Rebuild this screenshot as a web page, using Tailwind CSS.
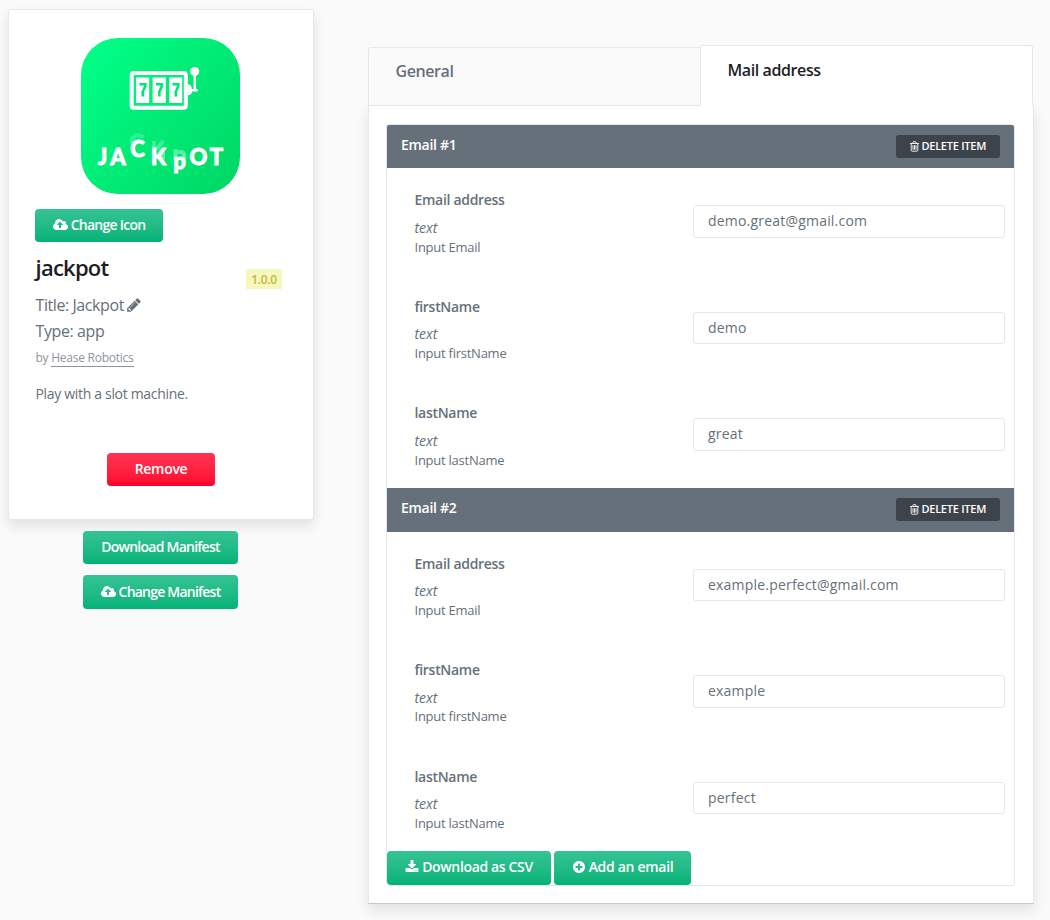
<!DOCTYPE html>
<html lang="en">
<head>
<meta charset="utf-8">
<title>Jackpot</title>
<script src="https://cdn.jsdelivr.net/npm/@tailwindcss/browser@4"></script>
</head>
<body class="bg-[#fafafa] w-[1050px] h-[920px] overflow-hidden font-['Open_Sans',sans-serif] text-[#66707a]">
<svg class="hidden" aria-hidden="true">
  <symbol id="cloud" viewBox="0 0 1920 1792"><path fill="currentColor" d="M1280 864q0-14-9-23L919 489q-9-9-23-9t-23 9L522 840q-10 12-10 24 0 14 9 23t23 9h224v352q0 13 9.500 22.500t22.500 9.500h192q13 0 22.500-9.500t9.500-22.500V896h224q13 0 22.500-9.500t9.500-22.500zm640 288q0 159-112.500 271.500T1536 1536H448q-185 0-316.500-131.500T0 1088q0-130 70-240t188-165q-2-30-2-43 0-212 150-362t362-150q156 0 285.500 87T1242 444q71-62 166-62 106 0 181 75t75 181q0 76-41 138 130 31 213.500 135.500T1920 1152z"/></symbol>
  <symbol id="pencil" viewBox="0 0 1792 1792"><path fill="currentColor" d="M491 1536l91-91-235-235-91 91v107h128v128h107zm523-928q0-22-22-22-10 0-17 7l-542 542q-7 7-7 17 0 22 22 22 10 0 17-7l542-542q7-7 7-17zm-54-192l416 416-832 832H128v-416zm683 96q0 53-37 90l-166 166-416-416 166-165q36-38 90-38 53 0 91 38l235 234q37 39 37 91z"/></symbol>
  <symbol id="download" viewBox="0 0 1792 1792"><path fill="currentColor" d="M1344 1344q0-26-19-45t-45-19-45 19-19 45 19 45 45 19 45-19 19-45zm256 0q0-26-19-45t-45-19-45 19-19 45 19 45 45 19 45-19 19-45zm128-224v320q0 40-28 68t-68 28H160q-40 0-68-28t-28-68v-320q0-40 28-68t68-28h465l135 136q58 56 136 56t136-56l136-136h464q40 0 68 28t28 68zm-325-569q17 41-14 70l-448 448q-18 19-45 19t-45-19L403 621q-31-29-14-70 17-39 59-39h256V64q0-26 19-45t45-19h256q26 0 45 19t19 45v448h256q42 0 59 39z"/></symbol>
  <symbol id="plus" viewBox="0 0 1792 1792"><path fill="currentColor" d="M1344 960V832q0-26-19-45t-45-19h-256V512q0-26-19-45t-45-19H832q-26 0-45 19t-19 45v256H512q-26 0-45 19t-19 45v128q0 26 19 45t45 19h256v256q0 26 19 45t45 19h128q26 0 45-19t19-45v-256h256q26 0 45-19t19-45zm320-64q0 209-103 385.500T1281.500 1561 896 1664t-385.500-103T231 1281.500 128 896t103-385.500T510.500 231 896 128t385.500 103T1561 510.500 1664 896z"/></symbol>
  <symbol id="trash" viewBox="0 0 9 11"><path fill="none" stroke="currentColor" stroke-width=".9" d="M0 2.500h9M2.800 2.300 3.300.700h2.400l.5 1.600M1.200 2.700v6.400q0 1.100 1 1.100h4.600q1 0 1-1.100V2.700M3 4.200v4.500M4.500 4.200v4.500M6 4.200v4.500"/></symbol>
</svg>

<div class="flex items-start pl-2">
  <!-- App summary -->
  <aside class="w-[306px] pt-[9px] flex flex-col items-center shrink-0">
    <div class="w-full h-[511px] rounded-[3px] border border-[#e6e7e8] bg-white shadow-[0_6px_12px_rgba(0,0,0,0.1)] px-[26px] pt-[28px] flex flex-col items-start">
      <svg class="self-center w-[159px] h-[156px] shrink-0 mr-[1px]" viewBox="0 0 159 156">
        <defs>
          <linearGradient id="g" x1="0" y1="0.100" x2="1" y2="0.900"><stop offset="0" stop-color="#00ff87"/><stop offset="1" stop-color="#00d865"/></linearGradient>
          <linearGradient id="fade" gradientUnits="userSpaceOnUse" x1="0" y1="94" x2="0" y2="122"><stop offset="0" stop-color="#5df5c0" stop-opacity=".35"/><stop offset="1" stop-color="#8df7cc" stop-opacity=".75"/></linearGradient>
          <filter id="soft" x="-20%" y="-20%" width="140%" height="140%"><feGaussianBlur stdDeviation=".6"/></filter>
        </defs>
        <rect width="159" height="156" rx="37" fill="url(#g)"/>
        <path fill="none" stroke="#fff" stroke-width="4" d="M52.200 35h50.600q2 0 2 2v30.700q0 2-2 2H52.200q-1.500 0-1.500-2V37q0-2 1.500-2z"/>
        <g fill="#fff">
          <path d="M55 39.500h13.200v25.500H55zM71.600 39.500h13.200v25.500H71.600zM88.200 39.500h13v25.500h-13z"/>
          <circle cx="113.700" cy="33.500" r="4.500"/>
          <path d="M106.500 46q4.300.5 4.300 5h1.800V36h2.400v15h1.700v2.600h-5.700q0 3.500-4.500 4z"/>
        </g>
        <path fill="none" stroke="#00e676" stroke-width="2.600" d="M58.500 46.200h5.800v2l-2.500 5.500v4.800M75 46.200h5.800v2l-2.500 5.500v4.800M91.500 46.200h5.800v2l-2.500 5.500v4.800"/>
        <!-- motion trails of the shifted letters -->
        <g fill="none" stroke="url(#fade)" stroke-width="4" filter="url(#soft)">
          <path d="M62.500 99.500q-3-3-7-2.200-5 1.200-4.500 8"/>
          <path d="M73 103v10M82.500 102.500l-7 9M82 112.500v9"/>
          <path d="M94.500 111v10M95 114h6q3 1 2 9"/>
        </g>
        <g font-family="Lato" font-weight="900" font-size="22" text-anchor="middle" fill="#fff" stroke="#fff" stroke-width=".9"><text x="21.500" y="127">J</text><text x="37" y="127">A</text><text x="56.500" y="118.700">C</text><text x="77.500" y="127">K</text><text x="98.500" y="131">p</text><text x="117.500" y="127">O</text><text x="135.500" y="127">T</text></g>
      </svg>
      <button class="mt-[15px] w-[128px] h-[33px] pb-[2px] shrink-0 rounded bg-linear-to-b from-[#34c396] to-[#00b377] text-white text-sm font-semibold tracking-[-0.75px] flex items-center justify-center gap-[3px]"><svg class="w-[15px] h-[14px]"><use href="#cloud"/></svg>Change Icon</button>
      <div class="w-full flex justify-between">
        <h1 class="mt-[10px] ml-[0.5px] text-[22px] leading-[30px] font-semibold tracking-[-0.75px] text-[#1c1e26]">jackpot</h1>
        <span class="mt-[27px] mr-[5px] w-[36px] h-5 bg-[#f5f8bc] text-[#c4b83c] text-[12px] leading-[21px] font-semibold tracking-[-0.3px] text-center">1.0.0</span>
      </div>
      <div class="ml-[0.5px]">
        <p class="mt-[3px] text-[16px] leading-[26px] tracking-[-0.42px] flex items-center gap-[2px]">Title: Jackpot <svg class="w-4 h-4"><use href="#pencil"/></svg></p>
        <p class="text-[16px] leading-[26px] tracking-[-0.4px]">Type: app</p>
        <p class="mt-[5px] text-[12px] leading-[17px] tracking-[-0.25px] text-[#8d949b]">by <span class="inline-block border-b border-[#8d949b]">Hease Robotics</span></p>
        <p class="mt-[17px] text-[14px] leading-5 tracking-[-0.32px]">Play with a slot machine.</p>
      </div>
      <button class="self-center mt-[49px] w-[108px] h-[33px] pb-[2px] shrink-0 rounded bg-linear-to-b from-[#ff3355] to-[#ff0029] text-white text-sm font-semibold tracking-[-0.3px]">Remove</button>
    </div>
    <button class="mt-[11px] mr-[1px] w-[155px] h-[33px] pb-[2px] rounded bg-linear-to-b from-[#34c396] to-[#00b377] text-white text-sm font-semibold tracking-[-0.75px]">Download Manifest</button>
    <button class="mt-[11px] mr-[1px] w-[155px] h-[34px] pb-[1px] rounded bg-linear-to-b from-[#34c396] to-[#00b377] text-white text-sm font-semibold tracking-[-0.78px] flex items-center justify-center gap-[3px]"><svg class="w-[15px] h-[14px]"><use href="#cloud"/></svg>Change Manifest</button>
  </aside>

  <!-- Settings -->
  <main class="ml-[54px] mt-[45px] w-[666px] shrink-0">
    <nav class="flex items-end h-[61px] relative z-10 -mb-px">
      <div class="w-[332px] h-[59px] border border-r-0 border-[#e6e7e8] rounded-tl-[3px] bg-[#fafafa] pl-[26.5px] pt-[11px] text-[16px] leading-6 font-semibold tracking-[-0.4px]">General</div>
      <div class="w-[333px] h-[61px] border border-b-0 border-[#e6e7e8] rounded-tr-[3px] bg-white pl-[26.5px] pt-[12px] text-[16px] leading-6 font-semibold tracking-[-0.4px] text-[#1c1e26]">Mail address</div>
    </nav>
    <div class="h-[799px] border-x border-b border-x-[#e6e7e8] border-b-[#c6c8ca] bg-white shadow-[0_6px_12px_rgba(0,0,0,0.1)] px-[17px] pt-[19px]">
      <div class="h-[762px] w-[629px] border border-[#e6e7e8] rounded-[3px] overflow-hidden" id="list"></div>
    </div>
  </main>
</div>

<template id="head">
  <div class="h-[43.7px] first:h-[43.4px] bg-[#66707a] pl-[14px] pr-[14px] flex justify-between items-start">
    <span class="t mt-[10.4px] text-[14px] leading-5 font-semibold tracking-[-0.3px] text-white"></span>
    <button class="mt-[10.2px] w-[104px] h-[22.6px] rounded-[3px] bg-[#3c434b] text-white text-[11px] font-semibold tracking-[-0.25px] flex items-center justify-center gap-[2.5px]"><svg class="w-[9px] h-[11px]"><use href="#trash"/></svg>DELETE ITEM</button>
  </div>
</template>
<template id="row">
  <div class="h-[106.5px] flex justify-between pl-[27.500px] pr-[9px]">
    <div>
      <p class="a mt-[22px] text-[14px] leading-5 font-semibold tracking-[-0.3px]"></p>
      <p class="mt-[7.55px] text-[14px] leading-[19px] italic tracking-[-0.05px]">text</p>
      <p class="b mt-[0.85px] text-[13px] leading-[19px] tracking-[-0.25px]"></p>
    </div>
    <div class="c mt-[37px] w-[312px] h-[32.6px] border border-[#e6e7e8] rounded-[3px] bg-white pl-[14px] text-[14px] leading-[30.4px] tracking-[0.2px]"></div>
  </div>
</template>
<template id="foot">
  <div class="flex gap-[3px]">
    <button class="w-[164px] h-[34px] pb-[2px] rounded bg-linear-to-b from-[#34c396] to-[#00b377] text-white text-sm font-semibold tracking-[-0.35px] flex items-center justify-center gap-[3px]"><svg class="w-[14px] h-[14px]"><use href="#download"/></svg>Download as CSV</button>
    <button class="w-[137px] h-[34px] pb-[2px] rounded bg-linear-to-b from-[#34c396] to-[#00b377] text-white text-sm font-semibold tracking-[-0.3px] flex items-center justify-center gap-[3px]"><svg class="w-[14px] h-[14px]"><use href="#plus"/></svg>Add an email</button>
  </div>
</template>
<script>
const list = document.getElementById('list');
const make = id => document.getElementById(id).content.firstElementChild.cloneNode(true);
[['demo.great@gmail.com', 'demo', 'great'], ['example.perfect@gmail.com', 'example', 'perfect']].forEach((values, i) => {
  const head = make('head');
  head.querySelector('.t').textContent = 'Email #' + (i + 1);
  list.append(head);
  [['Email address', 'Input Email'], ['firstName', 'Input firstName'], ['lastName', 'Input lastName']].forEach(([a, b], j) => {
    const row = make('row');
    row.querySelector('.a').textContent = a;
    row.querySelector('.b').textContent = b;
    row.querySelector('.c').textContent = values[j];
    list.append(row);
  });
});
list.append(make('foot'));
</script>
</body>
</html>
